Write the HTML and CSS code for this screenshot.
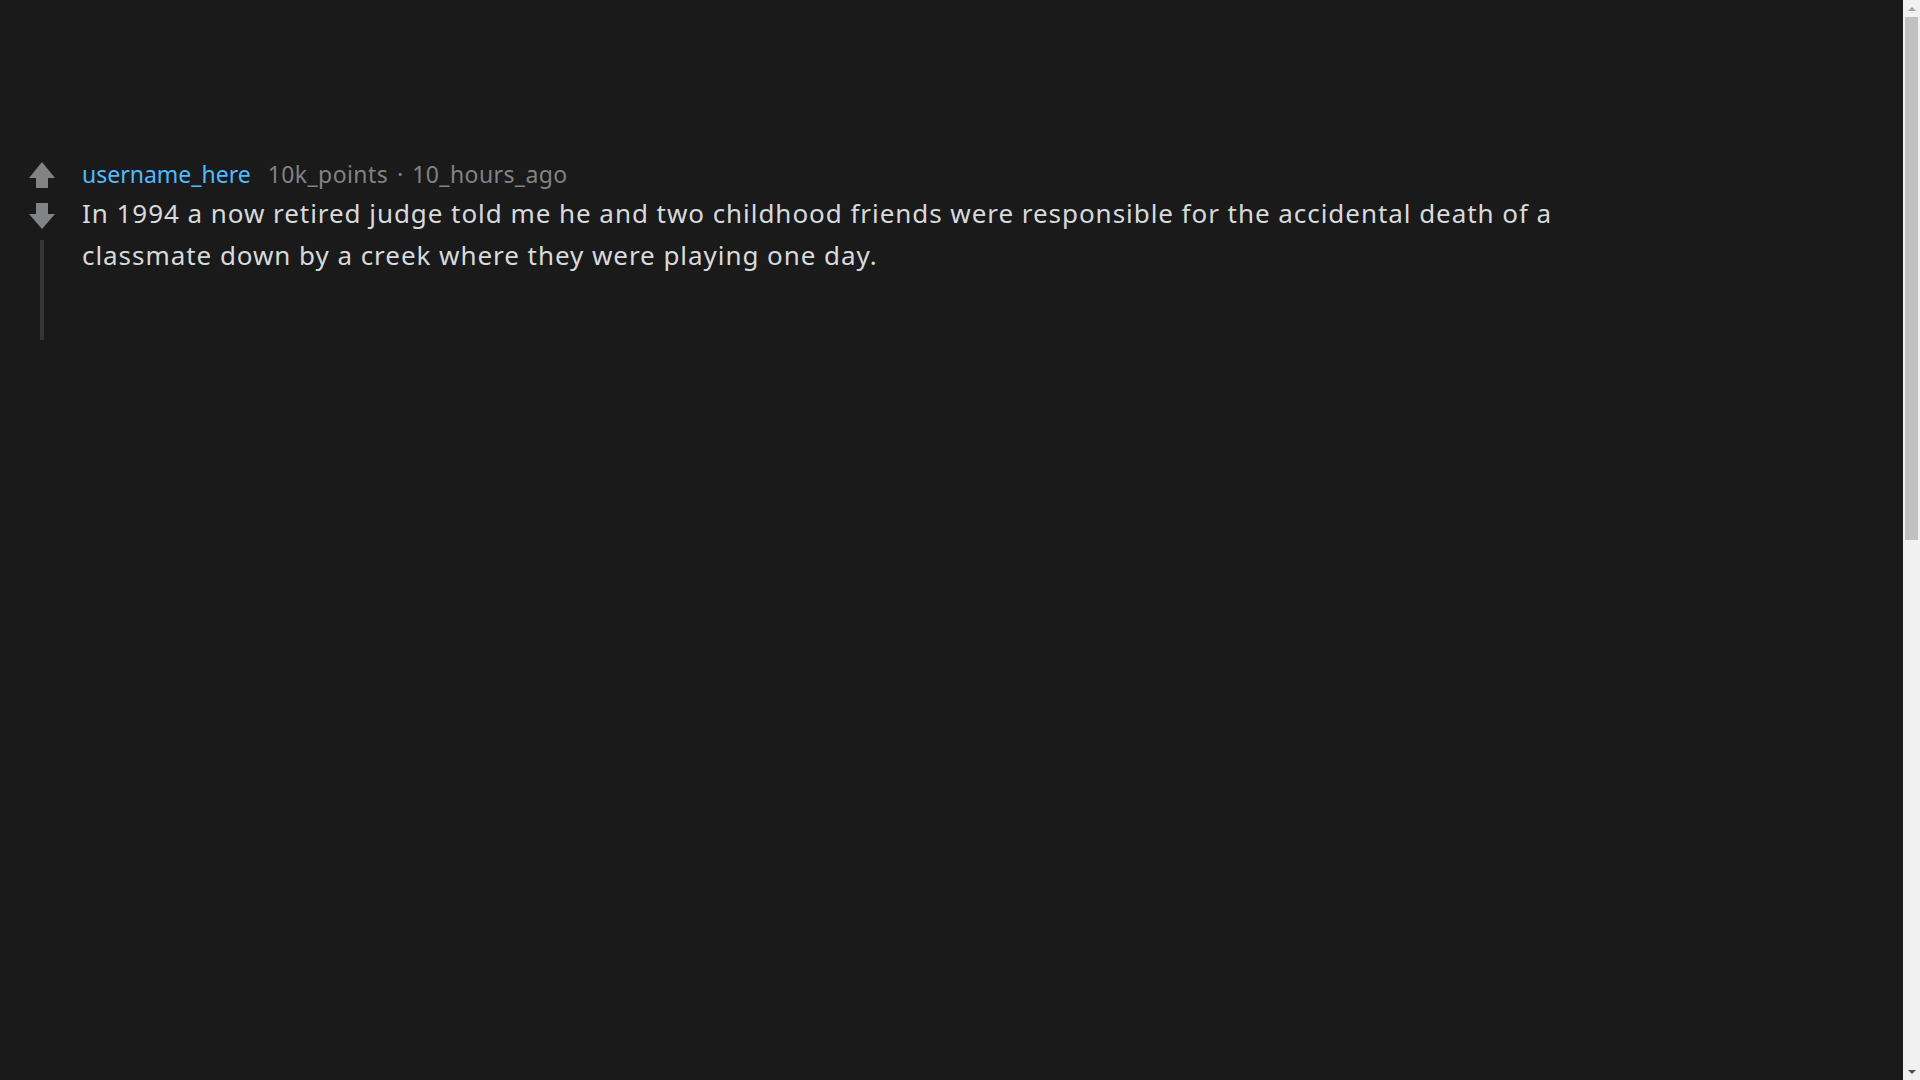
FILE: index.html
```html
<!DOCTYPE html>
<html lang="en">
<head>
<meta charset="utf-8">
<title>Comment</title>
<link rel="stylesheet" href="styles.css">
</head>
<body>
<div class="app">
  <main class="page">
    <div class="comment">
      <div class="votes">
        <svg class="arrow" width="26" height="26" viewBox="0 0 26 26"><path d="M13 0 L26 16 H19 V26 H7 V16 H0 Z" fill="#818384"/></svg>
        <svg class="arrow down" width="26" height="26" viewBox="0 0 26 26"><path d="M7 0 H19 V11 H26 L13 26 L0 11 H7 Z" fill="#818384"/></svg>
        <div class="thread-line"></div>
      </div>
      <div class="content">
        <div class="meta"><span class="user">username_here</span><span class="points">10k_points</span><span class="dot">·</span><span class="time">10_hours_ago</span></div>
        <p class="body-text">In 1994 a now retired judge told me he and two childhood friends were responsible for the accidental death of a classmate down by a creek where they were playing one day.</p>
      </div>
    </div>
  </main>
  <div class="scrollbar" aria-hidden="true">
    <div class="sb-button"><span class="tri-up"></span></div>
    <div class="sb-track"><div class="sb-thumb"></div></div>
    <div class="sb-button"><span class="tri-down"></span></div>
  </div>
</div>
</body>
</html>
```
FILE: styles.css
```css
html, body {
  margin: 0;
  padding: 0;
  background: #1a1a1b;
  overflow: hidden;
}
.app {
  display: flex;
  height: 100vh;
}
.page {
  flex: 1;
  padding: 159px 0 0 29px;
  box-sizing: border-box;
  overflow: hidden;
}
.comment {
  display: flex;
  gap: 27px;
}
.votes {
  width: 26px;
  display: flex;
  flex-direction: column;
  align-items: center;
  flex-shrink: 0;
}
.arrow {
  display: block;
  margin-top: 3px;
}
.arrow.down {
  margin-top: 15px;
}
.thread-line {
  width: 4px;
  height: 100px;
  margin-top: 11px;
  background: #343536;
}
.content {
  width: 1500px;
}
.meta {
  font-family: "Noto Sans", sans-serif;
  font-size: 23px;
  line-height: 30px;
  height: 30px;
  color: #818384;
  white-space: nowrap;
}
.user {
  color: #4fbcff;
  margin-right: 17px;
}
.points, .time {
  letter-spacing: 0.4px;
}
.dot {
  margin: 0 9px;
}
.body-text {
  margin: 3px 0 0;
  font-family: "Noto Sans", sans-serif;
  font-size: 26px;
  letter-spacing: 0.95px;
  line-height: 42px;
  color: #d7dadc;
}

/* scrollbar */
.scrollbar {
  width: 17px;
  flex-shrink: 0;
  background: #f1f1f1;
  display: flex;
  flex-direction: column;
}
.sb-button {
  height: 17px;
  display: flex;
  align-items: center;
  justify-content: center;
}
.tri-up {
  width: 0;
  height: 0;
  border-left: 4px solid transparent;
  border-right: 4px solid transparent;
  border-bottom: 4px solid #a3a3a3;
}
.tri-down {
  width: 0;
  height: 0;
  border-left: 4px solid transparent;
  border-right: 4px solid transparent;
  border-top: 4px solid #505050;
}
.sb-track {
  flex: 1;
  padding: 0 2px;
}
.sb-thumb {
  height: 523px;
  background: #c1c1c1;
}
```
